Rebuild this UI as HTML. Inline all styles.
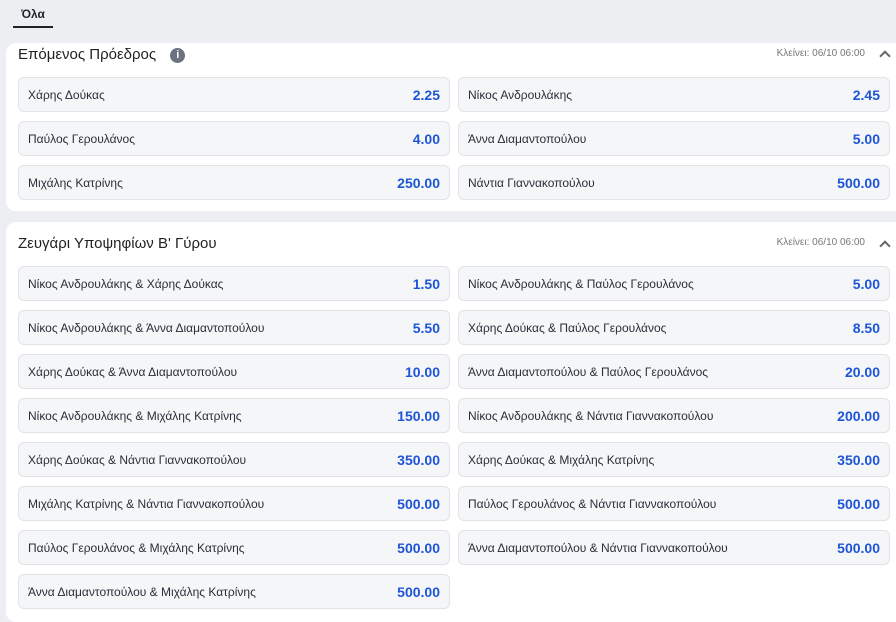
<!DOCTYPE html>
<html><head><meta charset="utf-8"><style>
*{box-sizing:border-box;margin:0;padding:0}
body{width:896px;height:605px;overflow:hidden;background:#eceef1;font-family:"Liberation Sans","DejaVu Sans",sans-serif;color:#1f2430;position:relative}
.tab{position:absolute;left:13px;top:0;width:40px;height:28px;border-bottom:2px solid #222;font-size:12px;font-weight:bold;text-align:center;line-height:28px}
.card{position:absolute;left:6px;width:900px;background:#fff;border-radius:10px}
.h{position:absolute;left:12px;font-size:15px;color:#222}
.cl{position:absolute;right:40px;font-size:10px;color:#777}
.car{position:absolute;right:16px;width:8px;height:8px;border-left:2px solid #666;border-top:2px solid #666;transform:rotate(45deg)}
.b{position:absolute;width:432px;height:35px;background:#f5f6f8;border:1px solid #e1e3e8;border-radius:6px;font-size:12px;display:flex;align-items:center;justify-content:space-between;padding:0 9px 0 9px;color:#2a2e38}
.b span{color:#1d55d6;font-weight:bold;font-size:14px}
.i{display:inline-block;width:15px;height:15px;border-radius:50%;background:#6b7280;color:#fff;font-size:11px;font-weight:bold;text-align:center;line-height:15px;margin-left:10px;vertical-align:1px}
</style></head><body>
<div class="tab">Όλα</div>
<div class="card" style="top:43px;height:168px">
<div class="h" style="top:3px">Επόμενος Πρόεδρος <span class="i">i</span></div>
<div class="cl" style="top:5px;right:41px">Κλείνει: 06/10 06:00</div>
<div class="car" style="top:9px;right:17px"></div>
<div class="b" style="left:12px;top:34px">Χάρης Δούκας<span>2.25</span></div>
<div class="b" style="left:452px;top:34px">Νίκος Ανδρουλάκης<span>2.45</span></div>
<div class="b" style="left:12px;top:78px">Παύλος Γερουλάνος<span>4.00</span></div>
<div class="b" style="left:452px;top:78px">Άννα Διαμαντοπούλου<span>5.00</span></div>
<div class="b" style="left:12px;top:122px">Μιχάλης Κατρίνης<span>250.00</span></div>
<div class="b" style="left:452px;top:122px">Νάντια Γιαννακοπούλου<span>500.00</span></div>
</div>
<div class="card" style="top:222px;height:400px">
<div class="h" style="top:13px">Ζευγάρι Υποψηφίων Β' Γύρου</div>
<div class="cl" style="top:15px;right:41px">Κλείνει: 06/10 06:00</div>
<div class="car" style="top:20px;right:17px"></div>
<div class="b" style="left:12px;top:44px">Νίκος Ανδρουλάκης &amp; Χάρης Δούκας<span>1.50</span></div>
<div class="b" style="left:452px;top:44px">Νίκος Ανδρουλάκης &amp; Παύλος Γερουλάνος<span>5.00</span></div>
<div class="b" style="left:12px;top:88px">Νίκος Ανδρουλάκης &amp; Άννα Διαμαντοπούλου<span>5.50</span></div>
<div class="b" style="left:452px;top:88px">Χάρης Δούκας &amp; Παύλος Γερουλάνος<span>8.50</span></div>
<div class="b" style="left:12px;top:132px">Χάρης Δούκας &amp; Άννα Διαμαντοπούλου<span>10.00</span></div>
<div class="b" style="left:452px;top:132px">Άννα Διαμαντοπούλου &amp; Παύλος Γερουλάνος<span>20.00</span></div>
<div class="b" style="left:12px;top:176px">Νίκος Ανδρουλάκης &amp; Μιχάλης Κατρίνης<span>150.00</span></div>
<div class="b" style="left:452px;top:176px">Νίκος Ανδρουλάκης &amp; Νάντια Γιαννακοπούλου<span>200.00</span></div>
<div class="b" style="left:12px;top:220px">Χάρης Δούκας &amp; Νάντια Γιαννακοπούλου<span>350.00</span></div>
<div class="b" style="left:452px;top:220px">Χάρης Δούκας &amp; Μιχάλης Κατρίνης<span>350.00</span></div>
<div class="b" style="left:12px;top:264px">Μιχάλης Κατρίνης &amp; Νάντια Γιαννακοπούλου<span>500.00</span></div>
<div class="b" style="left:452px;top:264px">Παύλος Γερουλάνος &amp; Νάντια Γιαννακοπούλου<span>500.00</span></div>
<div class="b" style="left:12px;top:308px">Παύλος Γερουλάνος &amp; Μιχάλης Κατρίνης<span>500.00</span></div>
<div class="b" style="left:452px;top:308px">Άννα Διαμαντοπούλου &amp; Νάντια Γιαννακοπούλου<span>500.00</span></div>
<div class="b" style="left:12px;top:352px">Άννα Διαμαντοπούλου &amp; Μιχάλης Κατρίνης<span>500.00</span></div>
</div>
</body></html>
